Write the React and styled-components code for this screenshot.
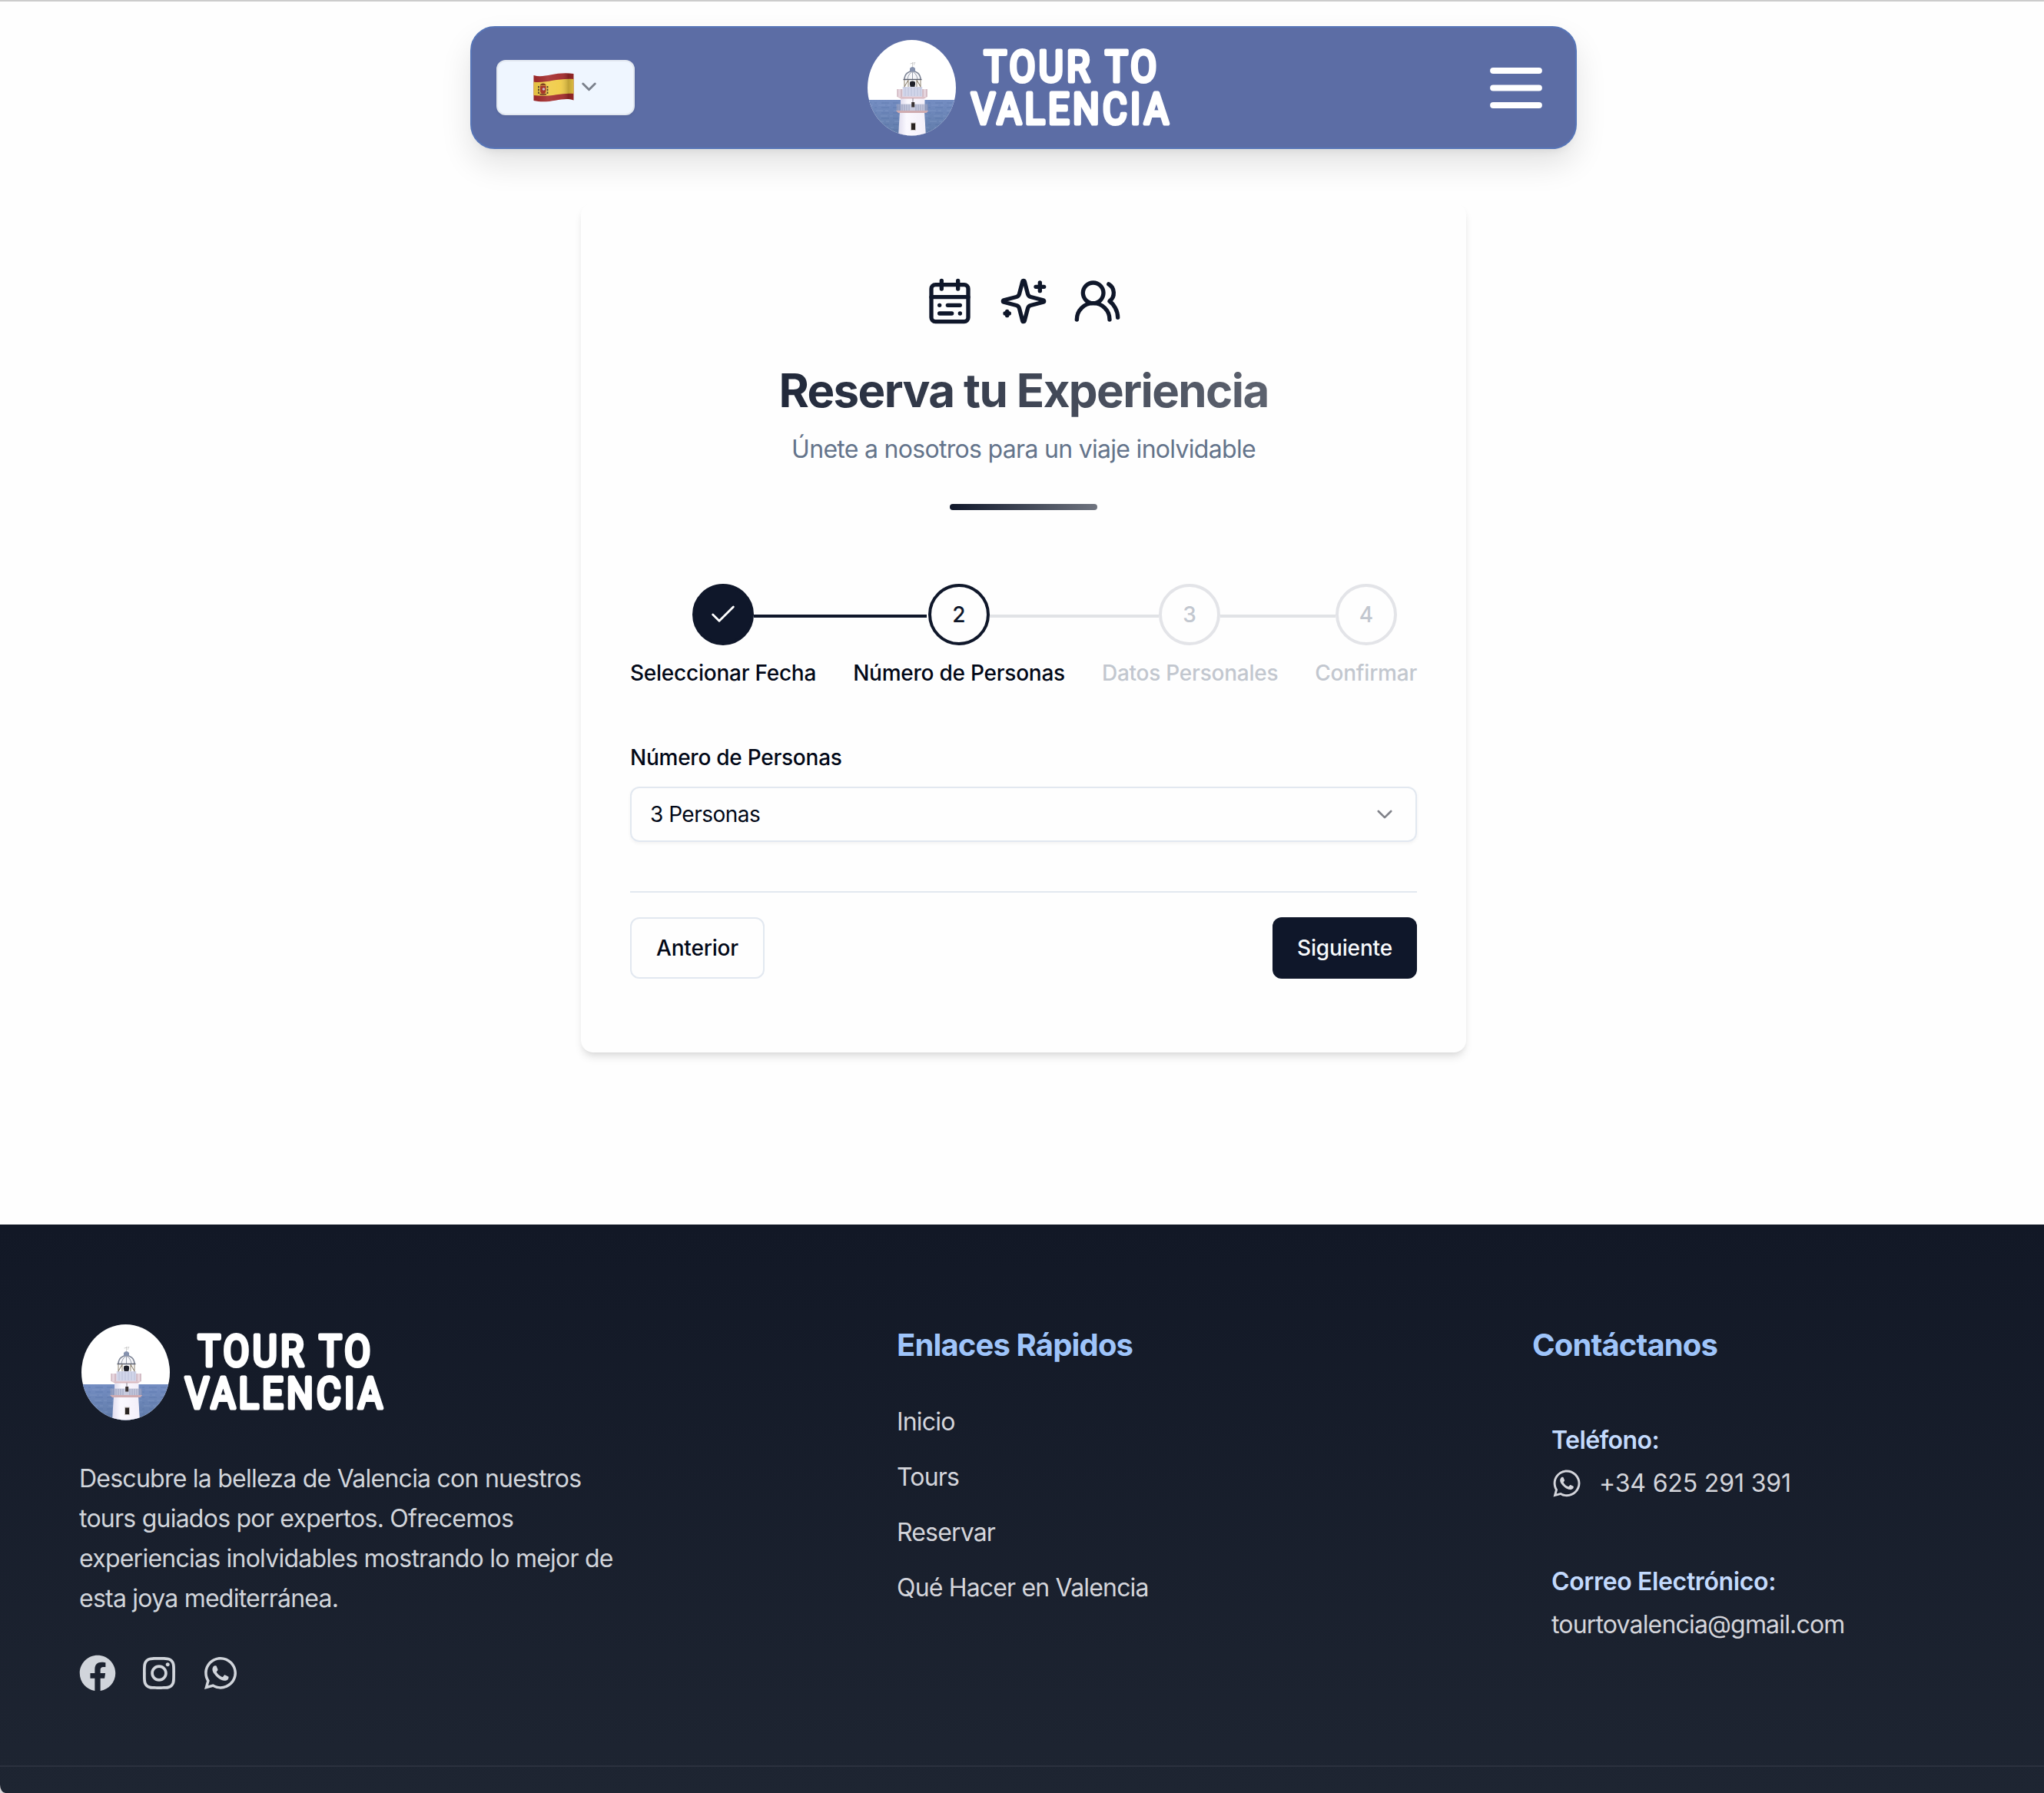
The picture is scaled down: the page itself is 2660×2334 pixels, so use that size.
import React from "react";
import styled, { createGlobalStyle } from "styled-components";
import { FaFacebook, FaInstagram, FaWhatsapp } from "react-icons/fa";

const GlobalStyle = createGlobalStyle`
  *, *::before, *::after { box-sizing: border-box; }
  body { margin: 0; background: #fefefe; overflow: hidden; }
  h1, h2, h3, p, ul { margin: 0; padding: 0; }
`;

const Viewport = styled.div`
  width: 100%;
  height: 2334px;
  overflow: hidden;
  background: #fefefe;
  border-top: 2px solid #cccccc;
  font-family: Inter, "Noto Sans", sans-serif;
  color: #020817;
`;

const Page = styled.div`
  width: 2664px;
  display: flex;
  flex-direction: column;
  align-items: center;
  padding-top: 32px;
`;

/* ---------- Navigation ---------- */

const Nav = styled.nav`
  width: 1440px;
  height: 160px;
  padding: 0 42px 0 32px;
  display: grid;
  grid-template-columns: 1fr 400px 1fr;
  align-items: center;
  background: #5c6da5;
  border: 2px solid #5775b7;
  border-radius: 32px;
  box-shadow: 0 20px 40px rgba(0, 0, 0, 0.11), 0 8px 12px -6px rgba(0, 0, 0, 0.07);
`;

const LanguageButton = styled.button`
  width: 180px;
  height: 72px;
  padding: 0 3px 2px 0;
  display: flex;
  align-items: center;
  justify-content: center;
  gap: 10px;
  background: #eff6ff;
  border: 2px solid #e2e8f0;
  border-radius: 12px;
  box-shadow: 0 2px 4px rgba(0, 0, 0, 0.06);
`;

const MenuButton = styled.button`
  justify-self: end;
  display: flex;
  padding: 0 1px 0 0;
  border: 0;
  background: none;
`;

/* ---------- Booking card ---------- */

const Card = styled.main`
  width: 1152px;
  margin-top: 70px;
  padding: 96px 64px;
  display: flex;
  flex-direction: column;
  background: #fefefe;
  border-radius: 16px;
  box-shadow: 0 8px 12px -2px rgba(0, 0, 0, 0.1), 0 4px 8px -4px rgba(0, 0, 0, 0.1);
`;

const Intro = styled.header`
  display: flex;
  flex-direction: column;
  align-items: center;
  text-align: center;
`;

const IconRow = styled.div`
  display: flex;
  gap: 32px;
`;

const Title = styled.h1`
  width: 100%;
  margin-top: 48px;
  font-size: 60px;
  line-height: 72px;
  font-weight: 700;
  letter-spacing: -1.605px;
  color: transparent;
  background: linear-gradient(to right, #0f172a, #6f747f);
  background-clip: text;
  -webkit-background-clip: text;
`;

const Subtitle = styled.p`
  margin-top: 17px;
  font-size: 32px;
  line-height: 48px;
  letter-spacing: -0.7px;
  color: #64748b;
`;

const Accent = styled.div`
  width: 192px;
  height: 8px;
  margin-top: 47px;
  border-radius: 4px;
  background: linear-gradient(to right, #0f172a, #6f747f);
`;

const StepTrack = styled.div`
  display: flex;
  align-items: center;
  margin-top: 96px;
  padding: 0 26px 0 81px;
`;

const StepCircle = styled.div`
  flex: none;
  width: 80px;
  height: 80px;
  display: flex;
  align-items: center;
  justify-content: center;
  border: 4px solid ${(p) => (p.$state === "pending" ? "#e3e4e8" : "#0f172a")};
  border-radius: 50%;
  background: ${(p) => (p.$state === "done" ? "#0f172a" : "#fefefe")};
  color: ${(p) => (p.$state === "pending" ? "#c2c7cf" : "#0f172a")};
  font-size: 28px;
  font-weight: 550;
`;

const StepLine = styled.div`
  width: ${(p) => p.$length}px;
  height: 4px;
  margin: 4px ${(p) => p.$gap || 0}px 0 0;
  background: ${(p) => (p.$done ? "#0f172a" : "#e1e3e6")};
`;

const StepLabels = styled.div`
  display: flex;
  justify-content: space-between;
  margin-top: 16px;
`;

const StepLabel = styled.span`
  font-size: 28px;
  line-height: 40px;
  font-weight: 500;
  letter-spacing: -0.24px;
  white-space: nowrap;
  color: ${(p) => (p.$pending ? "#c2c7cf" : "#020817")};
`;

const FieldLabel = styled.label`
  margin: 76px 0 24px;
  font-size: 28px;
  line-height: 28px;
  font-weight: 500;
  letter-spacing: -0.25px;
`;

const SelectBox = styled.div`
  height: 72px;
  padding: 0 30px 0 24px;
  display: flex;
  align-items: center;
  justify-content: space-between;
  border: 2px solid #e2e8f0;
  border-radius: 12px;
  box-shadow: 0 2px 4px rgba(0, 0, 0, 0.05);
  font-size: 28px;
  letter-spacing: -0.51px;
`;

const Actions = styled.div`
  display: flex;
  justify-content: space-between;
  margin-top: 64px;
  padding-top: 32px;
  border-top: 2px solid #e2e8f0;
`;

const Button = styled.button`
  width: ${(p) => (p.$primary ? 188 : 175)}px;
  height: 80px;
  padding: 0;
  border: ${(p) => (p.$primary ? "0" : "2px solid #e2e8f0")};
  border-radius: 12px;
  background: ${(p) => (p.$primary ? "#0f172a" : "#fefefe")};
  color: ${(p) => (p.$primary ? "#f8fafc" : "#020817")};
  font-family: inherit;
  font-size: 28px;
  font-weight: ${(p) => (p.$primary ? 540 : 500)};
  letter-spacing: -0.17px;
`;

/* ---------- Footer ---------- */

const FooterFrame = styled.div`
  width: 100%;
  margin-top: 224px;
  background: #ddd8db;
`;

const FooterArea = styled.footer`
  height: 740px;
  background: linear-gradient(to bottom, #121826, #1e2532);
  border-radius: 0 0 0 7px / 0 0 0 11px;
`;

const FooterColumns = styled.div`
  height: 706px;
  padding: 128px 103px 0 104px;
  display: grid;
  grid-template-columns: 1063px 827px 1fr;
  align-items: start;
  border-bottom: 2px solid #2b313e;
`;

const Brand = styled.section`
  display: flex;
  flex-direction: column;
`;

const About = styled.p`
  margin: 49px 0 0 -1px;
  font-size: 32px;
  line-height: 52px;
  font-weight: 420;
  letter-spacing: -0.76px;
  white-space: pre-line;
  color: #d1d5db;
`;

const Socials = styled.div`
  display: flex;
  gap: 32px;
  margin: 47px 0 0 -1px;
  font-size: 48px;
  color: #d1d5db;
  svg { display: block; }
`;

const LinksColumn = styled.section`
  padding-top: 1px;
`;

const FooterTitle = styled.h2`
  font-size: 40px;
  line-height: 56px;
  font-weight: 700;
  letter-spacing: -0.86px;
  color: #9ec4fa;
`;

const LinkList = styled.ul`
  display: flex;
  flex-direction: column;
  gap: 24px;
  margin-top: 48px;
  list-style: none;
`;

const FooterText = styled.span`
  display: block;
  font-size: 32px;
  line-height: 48px;
  font-weight: 420;
  letter-spacing: ${(p) => p.$tracking || -0.83}px;
  color: #d4d5db;
`;

const Contacts = styled.div`
  display: flex;
  flex-direction: column;
  gap: 80px;
  margin-top: 72px;
  padding-left: 25px;
`;

const ContactItem = styled.div`
  display: flex;
  flex-direction: column;
  gap: 8px;
`;

const ContactLabel = styled.h3`
  font-size: 32px;
  line-height: 48px;
  font-weight: 620;
  letter-spacing: ${(p) => p.$tracking}px;
  color: #c3dafd;
`;

const PhoneRow = styled.div`
  display: flex;
  align-items: center;
  gap: 22px;
  color: #d4d5db;
`;

/* ---------- Drawings ---------- */

const Flag = () => (
  <svg width="53" height="39" viewBox="0 0 53 39">
    <defs>
      <clipPath id="flagShape">
        <path d="M.5 4C15 8.500 28-1.500 52.500 2V36.500C38 31 22 42 .5 37Z" />
      </clipPath>
      <linearGradient id="flagShade">
        <stop offset="0" stopColor="#000" stopOpacity=".06" />
        <stop offset=".35" stopColor="#fff" stopOpacity=".1" />
        <stop offset=".65" stopColor="#fff" stopOpacity=".05" />
        <stop offset=".86" stopColor="#000" stopOpacity=".2" />
        <stop offset="1" stopColor="#000" stopOpacity=".08" />
      </linearGradient>
    </defs>
    <g clipPath="url(#flagShape)">
      <rect width="53" height="39" fill="#a32a2b" />
      <path d="M0 12.500C16 15 30 7.500 53 9V28C37 26 22 33 0 30Z" fill="#f0cb45" />
      <rect width="53" height="39" fill="url(#flagShade)" />
    </g>
    <path d="M9 17.500h7.500v6.500a3.750 4.200 0 0 1-7.500 0z" fill="#a8392c" />
    <path d="M8.500 16.800q4.200-4.500 8.500 0z" fill="#70301c" />
    <path d="M7 18v10M18.500 18v10" stroke="#57402c" strokeWidth="1.800" strokeDasharray="2.500 1.200" />
    <circle cx="13.500" cy="22" r="1.700" fill="#c9bccf" />
    <path d="M8.500 28.500q4.200 1.500 8.500 0" stroke="#6b3325" fill="none" strokeWidth="1.400" />
  </svg>
);

const Chevron = ({ width = 20, stroke = 2.6, color = "#808289" }) => (
  <svg width={width} height={width * 0.62} viewBox="0 0 20 12.400" fill="none" stroke={color} strokeWidth={stroke} strokeLinecap="round" strokeLinejoin="round">
    <path d="M1.800 2l8.200 8.200L18.200 2" />
  </svg>
);

const MenuIcon = () => (
  <svg width="68" height="55" viewBox="0 0 68 55" stroke="#fff" strokeWidth="8.200" strokeLinecap="round">
    <path d="M4.200 5h59.600M4.200 27.500h59.600M4.200 50h59.600" />
  </svg>
);

const LineIcon = ({ size = 64, stroke = 2, color = "#0f172a", children }) => (
  <svg width={size} height={size} viewBox="0 0 24 24" fill="none" stroke={color} strokeWidth={stroke} strokeLinecap="round" strokeLinejoin="round">
    {children}
  </svg>
);

const CalendarIcon = () => (
  <LineIcon>
    <rect width="18" height="18" x="3" y="4" rx="2" />
    <path d="M16 2v4M3 10h18M8 2v4M17 14h-6M13 18H7M7 14h.01M17 18h.01" />
  </LineIcon>
);

const SparklesIcon = () => (
  <LineIcon>
    <path d="M9.937 15.500A2 2 0 0 0 8.500 14.063l-6.135-1.582a.5.5 0 0 1 0-.962L8.500 9.936A2 2 0 0 0 9.937 8.500l1.582-6.135a.5.5 0 0 1 .963 0L14.063 8.500A2 2 0 0 0 15.500 9.937l6.135 1.581a.5.5 0 0 1 0 .964L15.500 14.063a2 2 0 0 0-1.437 1.437l-1.582 6.135a.5.5 0 0 1-.963 0z" />
    <path d="M20 3v4M22 5h-4M4 17v2M5 18H3" />
  </LineIcon>
);

const PeopleIcon = () => (
  <LineIcon>
    <path d="M18 21a8 8 0 0 0-16 0" />
    <circle cx="10" cy="8" r="5" />
    <path d="M22 20c0-3.370-2-6.500-4-8a5 5 0 0 0-.45-8.300" />
  </LineIcon>
);

const Logo = ({ id }) => (
  <svg width="400" height="128" viewBox="0 0 400 128">
    <defs>
      <clipPath id={`${id}-disc`}>
        <ellipse cx="59.500" cy="64.300" rx="57.500" ry="62.300" />
      </clipPath>
      <linearGradient id={`${id}-sea`} x1="0" y1="0" x2="0" y2="1">
        <stop offset="0" stopColor="#748dc2" />
        <stop offset="1" stopColor="#607ba8" />
      </linearGradient>
      <linearGradient id={`${id}-tower`}>
        <stop offset="0" stopColor="#dfdcee" />
        <stop offset=".3" stopColor="#fbf9ff" />
        <stop offset="1" stopColor="#f3eff9" />
      </linearGradient>
    </defs>
    <g clipPath={`url(#${id}-disc)`}>
      <rect width="120" height="128" fill="#fff" />
      <rect y="80" width="120" height="48" fill={`url(#${id}-sea)`} />
      <path d="M0 84h120M0 90h120M0 97h120M0 104h120M0 112h120M0 119h120" stroke="#4d6ba1" strokeWidth="1" strokeDasharray="7 4 3 6 10 5" opacity=".4" />
      <path d="M5 87h110M2 94h115M8 101h110M3 108h110M9 116h110" stroke="#95abd4" strokeWidth="1" strokeDasharray="4 7 9 3" opacity=".4" />
      <path d="M44 95h32l2 33H42z" fill={`url(#${id}-tower)`} />
      <rect x="45" y="75" width="31.500" height="20" fill={`url(#${id}-tower)`} />
      <rect x="39.700" y="85.500" width="40.600" height="8.500" fill="#a7aec9" opacity=".6" />
      <path d="M41 86v8M44 86v8M47 86v8M50 86v8M53 86v8M56 86v8M65 86v8M68 86v8M71 86v8M74 86v8M77 86v8M80 86v8" stroke="#8089ad" strokeWidth=".6" />
      <path d="M39 94h42.500l-3 3h-36.500z" fill="#cfabb0" />
      <rect x="40.700" y="66" width="39" height="10" fill="#e6d5de" />
      <path d="M41 66v10M46 66v10M74 66v10M79 66v10" stroke="#b5939d" strokeWidth=".8" />
      <path d="M40.500 76.300h39.500l-5 2.200h-29z" fill="#d9b9bf" />
      <rect x="47.700" y="63" width="25.500" height="12.500" fill="#d2d6ea" />
      <path d="M51 64v11M55 64v11M59 64v11M63 64v11M67 64v11M71 64v11" stroke="#b5bbd6" strokeWidth=".8" />
      <path d="M50 53.500C50 46 56 42.500 60.500 42.500S71 46 71 53.500" fill="#f6f6f9" stroke="#7c8394" strokeWidth="1.500" />
      <path d="M54 53q1-7 6.500-10 5.500 3 6.500 10M60.500 43v10" fill="none" stroke="#9aa0ae" strokeWidth="1" />
      <path d="M48.500 53.500h24" stroke="#5b6070" strokeWidth="1.400" />
      <path d="M50 54v9.500M71 54v9.500M50 63l5-9M71 63l-5-9M55 54v9M66 54v9" stroke="#958a7a" strokeWidth="1.100" />
      <path d="M57.500 56h6v7h-6z" fill="#34363e" />
      <circle cx="60.500" cy="59" r="3.600" fill="#1e2029" />
      <path d="M57 43v-4q3.500-4 7 0v4z" fill="#8591ad" />
      <path d="M60.500 37v-6M57.500 33l6-1.500M62 35l2-4" stroke="#c4c4c4" strokeWidth=".8" />
      <rect x="59.200" y="83" width="4" height="6.500" fill="#3a3333" />
      <path d="M61 78v5" stroke="#8c8490" strokeWidth="1" />
      <rect x="58.500" y="110" width="6" height="9.500" fill="#2a2422" stroke="#cfc9c9" strokeWidth="1" />
    </g>
    <g fill="#fff" stroke="#fff" strokeWidth="5.200" strokeLinejoin="round" strokeLinecap="round" fontFamily="Roboto, sans-serif" fontWeight="400" fontSize="56" letterSpacing="5">
      <text x="153.500" y="56.300" textLength="229" lengthAdjust="spacingAndGlyphs">TOUR TO</text>
      <text x="137" y="111.300" textLength="261" lengthAdjust="spacingAndGlyphs">VALENCIA</text>
    </g>
  </svg>
);

const steps = [
  { label: "Seleccionar Fecha", state: "done", line: 225, gap: 2 },
  { label: "Número de Personas", state: "active", line: 220 },
  { label: "Datos Personales", state: "pending", line: 150 },
  { label: "Confirmar", state: "pending" },
];

const links = ["Inicio", "Tours", "Reservar", "Qué Hacer en Valencia"];

export default function App() {
  return (
    <Viewport>
      <GlobalStyle />
      <Page>
        <Nav>
          <LanguageButton>
            <Flag />
            <Chevron width={19} stroke={3} color="#7b818c" />
          </LanguageButton>
          <Logo id="nav" />
          <MenuButton><MenuIcon /></MenuButton>
        </Nav>

        <Card>
          <Intro>
            <IconRow>
              <CalendarIcon />
              <SparklesIcon />
              <PeopleIcon />
            </IconRow>
            <Title>Reserva tu Experiencia</Title>
            <Subtitle>Únete a nosotros para un viaje inolvidable</Subtitle>
            <Accent />
          </Intro>

          <StepTrack>
            {steps.map((s, i) => (
              <React.Fragment key={s.label}>
                <StepCircle $state={s.state}>
                  {s.state === "done" ? (
                    <LineIcon size={40} stroke={1.7} color="#fff"><path d="M20 6 9 17l-5-5" /></LineIcon>
                  ) : i + 1}
                </StepCircle>
                {s.line && <StepLine $length={s.line} $gap={s.gap} $done={s.state === "done"} />}
              </React.Fragment>
            ))}
          </StepTrack>
          <StepLabels>
            {steps.map((s) => (
              <StepLabel key={s.label} $pending={s.state === "pending"}>{s.label}</StepLabel>
            ))}
          </StepLabels>

          <FieldLabel>Número de Personas</FieldLabel>
          <SelectBox>
            <span>3 Personas</span>
            <Chevron />
          </SelectBox>

          <Actions>
            <Button>Anterior</Button>
            <Button $primary>Siguiente</Button>
          </Actions>
        </Card>

        <FooterFrame>
          <FooterArea>
            <FooterColumns>
              <Brand>
                <Logo id="footer" />
                <About>
                  {"Descubre la belleza de Valencia con nuestros\ntours guiados por expertos. Ofrecemos\nexperiencias inolvidables mostrando lo mejor de\nesta joya mediterránea."}
                </About>
                <Socials>
                  <FaFacebook />
                  <FaInstagram />
                  <FaWhatsapp />
                </Socials>
              </Brand>
              <LinksColumn>
                <FooterTitle>Enlaces Rápidos</FooterTitle>
                <LinkList>
                  {links.map((l) => (
                    <li key={l}><FooterText>{l}</FooterText></li>
                  ))}
                </LinkList>
              </LinksColumn>
              <LinksColumn>
                <FooterTitle>Contáctanos</FooterTitle>
                <Contacts>
                  <ContactItem>
                    <ContactLabel $tracking={-0.58}>Teléfono:</ContactLabel>
                    <PhoneRow>
                      <FaWhatsapp size={40} />
                      <FooterText $tracking={-0.15}>+34 625 291 391</FooterText>
                    </PhoneRow>
                  </ContactItem>
                  <ContactItem>
                    <ContactLabel $tracking={-0.36}>Correo Electrónico:</ContactLabel>
                    <FooterText>tourtovalencia@gmail.com</FooterText>
                  </ContactItem>
                </Contacts>
              </LinksColumn>
            </FooterColumns>
          </FooterArea>
        </FooterFrame>
      </Page>
    </Viewport>
  );
}
